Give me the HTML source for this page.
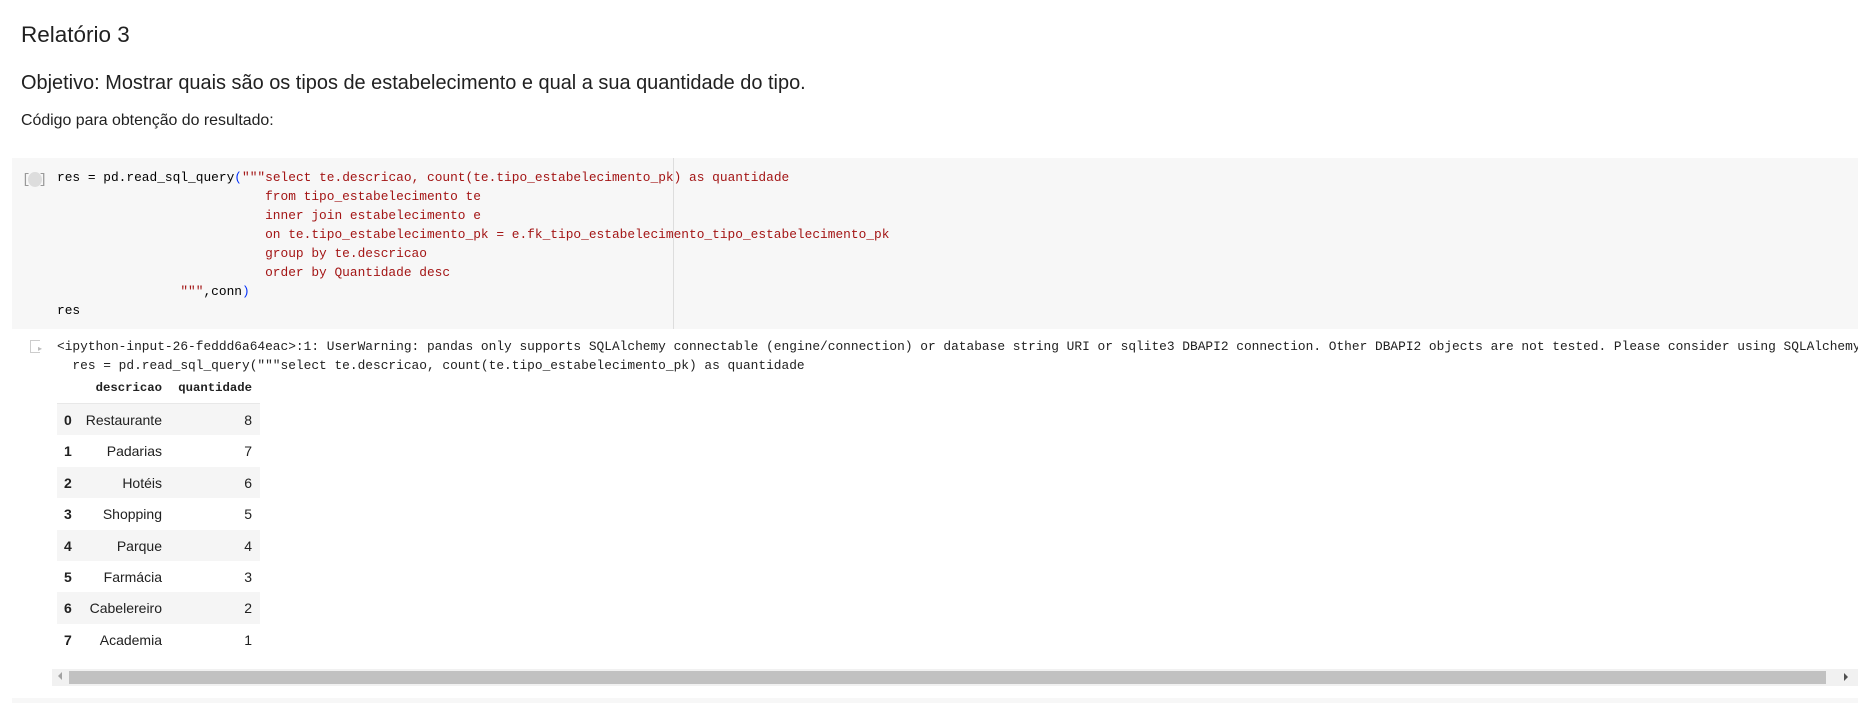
<!DOCTYPE html>
<html><head><meta charset="utf-8"><style>
*{margin:0;padding:0;box-sizing:border-box}
body{width:1858px;height:703px;overflow:hidden;background:#fff;position:relative;font-family:"Liberation Sans",Arial,sans-serif;color:#212121}
.a{position:absolute;white-space:pre}
.m{font-family:"Liberation Mono",monospace;font-size:12.85px;line-height:19px}
.s{color:#a31515}.b{color:#0431fa}
</style></head><body>
<div class="a" style="left:21px;top:22px;font-size:22.5px">Relatório 3</div>
<div class="a" style="left:21px;top:72px;font-size:19.95px">Objetivo: Mostrar quais são os tipos de estabelecimento e qual a sua quantidade do tipo.</div>
<div class="a" style="left:21px;top:112px;font-size:15.9px">Código para obtenção do resultado:</div>

<div class="a" style="left:12px;top:158px;width:1846px;height:171px;background:#f7f7f7"></div>
<div class="a" style="left:673px;top:158px;width:1px;height:171px;background:#ddd"></div>
<div class="a" style="left:22px;top:172px;width:20px;height:16px;font-family:'Liberation Mono',monospace;font-size:14px;color:#999;line-height:16px">[ ]</div>
<div class="a" style="left:28px;top:172px;width:14px;height:15px;border-radius:50%;background:#ddd"></div>
<div class="a m" style="left:57px;top:168px;color:#000">res = pd.read_sql_query<span class="b">(</span><span class="s">"""select te.descricao, count(te.tipo_estabelecimento_pk) as quantidade
                           from tipo_estabelecimento te
                           inner join estabelecimento e
                           on te.tipo_estabelecimento_pk = e.fk_tipo_estabelecimento_tipo_estabelecimento_pk
                           group by te.descricao
                           order by Quantidade desc
                """</span>,conn<span class="b">)</span>
res</div>

<div class="a" style="left:30px;top:340px;width:10px;height:13px;border:1px solid #ccc;border-right:none"></div>
<div class="a" style="left:38px;top:344px;color:#bbb;font-size:8px">▸</div>
<div class="a m" style="left:57px;top:337px;color:#212121">&lt;ipython-input-26-feddd6a64eac&gt;:1: UserWarning: pandas only supports SQLAlchemy connectable (engine/connection) or database string URI or sqlite3 DBAPI2 connection. Other DBAPI2 objects are not tested. Please consider using SQLAlchemy
  res = pd.read_sql_query("""select te.descricao, count(te.tipo_estabelecimento_pk) as quantidade</div>

<div class="a" style="left:57px;top:403px;width:203px;height:1px;background:#e8e8e8"></div>
<div class="a" style="left:57px;top:381px;width:105px;text-align:right;font-family:'Liberation Mono',monospace;font-weight:bold;font-size:12.3px">descricao</div>
<div class="a" style="left:160px;top:381px;width:92px;text-align:right;font-family:'Liberation Mono',monospace;font-weight:bold;font-size:12.3px">quantidade</div>
<div id="t"></div>
<script>
var d=[["Restaurante",8],["Padarias",7],["Hotéis",6],["Shopping",5],["Parque",4],["Farmácia",3],["Cabelereiro",2],["Academia",1]],h="";
for(var i=0;i<8;i++){var y=404+i*31.4;
h+='<div class="a" style="left:57px;top:'+y+'px;width:203px;height:31.4px;background:'+(i%2?'#fff':'#f5f5f5')+'"></div>';
h+='<div class="a" style="left:64px;top:'+(y+8)+'px;font-size:14px;font-weight:bold">'+i+'</div>';
h+='<div class="a" style="left:80px;top:'+(y+8)+'px;width:82px;text-align:right;font-size:14px">'+d[i][0]+'</div>';
h+='<div class="a" style="left:200px;top:'+(y+8)+'px;width:52px;text-align:right;font-size:14px">'+d[i][1]+'</div>';}
document.getElementById('t').innerHTML=h;
</script>

<div class="a" style="left:52px;top:669px;width:1806px;height:17px;background:#f1f1f1"></div>
<div class="a" style="left:69px;top:671px;width:1757px;height:13px;background:#c1c1c1"></div>
<div class="a" style="left:58px;top:672px;width:0;height:0;border-top:4px solid transparent;border-bottom:4px solid transparent;border-right:4px solid #a3a3a3"></div>
<div class="a" style="left:1844px;top:673px;width:0;height:0;border-top:4px solid transparent;border-bottom:4px solid transparent;border-left:4px solid #505050"></div>
<div class="a" style="left:12px;top:698px;width:1846px;height:5px;background:#f7f7f7"></div>
</body></html>
